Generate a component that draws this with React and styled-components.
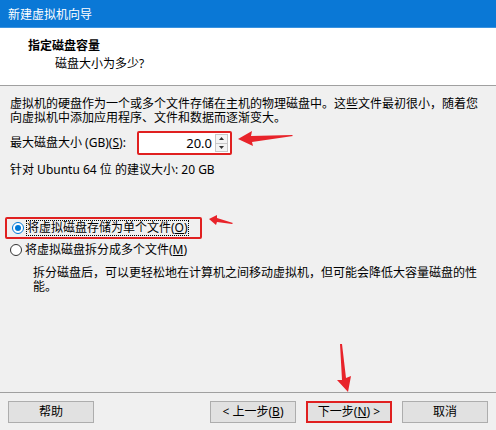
import React, { useState } from 'react';
import styled, { createGlobalStyle } from 'styled-components';

const GlobalStyle = createGlobalStyle`
  html, body {
    margin: 0;
    padding: 0;
    overflow: hidden;
  }
  body {
    font-family: "Noto Sans", "Noto Sans CJK SC", sans-serif;
    font-size: 12px;
    color: #000;
  }
`;

const Window = styled.div`
  position: relative;
  width: 496px;
  height: 430px;
  display: flex;
  flex-direction: column;
  background: #f0f0f0;
`;

const TitleBar = styled.div`
  height: 27px;
  background: #0a78d6;
  color: #fff;
  display: flex;
  align-items: center;
  padding-left: 8px;
  font-size: 12px;
  border-bottom: 1px solid #3a93e0;
`;

const Header = styled.div`
  height: 58px;
  background: #fff;
  border-bottom: 1px solid #a0a0a0;
  padding: 9px 0 0 28px;
  box-sizing: border-box;
  line-height: 18px;
`;

const HeaderTitle = styled.div`
  font-weight: bold;
`;

const HeaderSub = styled.div`
  padding-left: 27px;
`;

const Body = styled.div`
  flex: 1;
  padding: 11px 10px 0 10px;
  display: flex;
  flex-direction: column;
  line-height: 14px;
`;

const Paragraph = styled.p`
  margin: 0;
  padding-left: ${({ indent }) => indent || 0}px;
  margin-top: ${({ top }) => top || 0}px;
`;

const SizeRow = styled.div`
  display: flex;
  align-items: center;
  margin-top: 6px;
  height: 24px;
`;

const Label = styled.span`
  width: 127px;
  u { text-decoration: underline; }
`;

const Highlight = styled.div`
  border: 2px solid #e02020;
  border-radius: 2px;
  display: flex;
  align-items: center;
  box-sizing: border-box;
`;

const NumberBox = styled.div`
  width: 91px;
  height: 20px;
  background: #fff;
  display: flex;
  align-items: center;
  justify-content: flex-end;
  font-size: 13px;
`;

const Spinner = styled.div`
  width: 13px;
  height: 18px;
  margin: 0 2px 0 3px;
  border: 1px solid #c8c8c8;
  display: flex;
  flex-direction: column;
  box-sizing: border-box;
`;

const SpinHalf = styled.div`
  flex: 1;
  display: flex;
  align-items: center;
  justify-content: center;
  background: #f4f4f4;
  & + & { border-top: 1px solid #c8c8c8; }
`;

const Hint = styled.div`
  margin-top: 8px;
`;

const RadioGroup = styled.div`
  margin-top: 40px;
  margin-left: -5px;
  display: flex;
  flex-direction: column;
`;

const RadioRow = styled.label`
  display: flex;
  align-items: center;
  height: 22px;
  padding-left: 5px;
  gap: 3px;
  width: fit-content;
  box-sizing: border-box;
  border: 2px solid ${({ marked }) => (marked ? '#e02020' : 'transparent')};
  border-radius: 2px;
  padding-right: ${({ marked }) => (marked ? '12px' : '0')};
  margin-left: ${({ marked }) => (marked ? '0' : '-2px')};
`;

const RadioCircle = styled.span`
  width: 12px;
  height: 12px;
  border-radius: 50%;
  border: 1px solid ${({ checked }) => (checked ? '#0078d7' : '#333')};
  background: #fff;
  display: flex;
  align-items: center;
  justify-content: center;
  box-sizing: border-box;
  &::after {
    content: '';
    width: 6px;
    height: 6px;
    border-radius: 50%;
    background: ${({ checked }) => (checked ? '#0078d7' : 'transparent')};
  }
`;

const RadioText = styled.span`
  outline: ${({ focused }) => (focused ? '1px dotted #000' : 'none')};
  line-height: 14px;
`;

const Footer = styled.div`
  height: 38px;
  border-top: 1px solid #a0a0a0;
  display: flex;
  align-items: flex-start;
  padding: 8px 8px 0 8px;
  box-sizing: border-box;
  gap: 10px;
`;

const Spacer = styled.div`
  flex: 1;
`;

const Button = styled.button`
  width: 86px;
  height: 22px;
  background: #e1e1e1;
  border: ${({ primary }) => (primary ? '2px solid #e02020' : '1px solid #adadad')};
  font-family: inherit;
  font-size: 12px;
  color: #000;
  padding: 0;
  line-height: 18px;
`;

const Arrow = styled.svg`
  position: absolute;
  left: ${({ x }) => x}px;
  top: ${({ y }) => y}px;
  overflow: visible;
`;

export default function App() {
  const [mode, setMode] = useState('single');
  return (
    <>
      <GlobalStyle />
      <Window>
        <TitleBar>新建虚拟机向导</TitleBar>
        <Header>
          <HeaderTitle>指定磁盘容量</HeaderTitle>
          <HeaderSub>磁盘大小为多少?</HeaderSub>
        </Header>
        <Body>
          <Paragraph>
            虚拟机的硬盘作为一个或多个文件存储在主机的物理磁盘中。这些文件最初很小，随着您向虚拟机中添加应用程序、文件和数据而逐渐变大。
          </Paragraph>
          <SizeRow>
            <Label>最大磁盘大小 (GB)(<u>S</u>):</Label>
            <Highlight>
              <NumberBox>
                20.0
                <Spinner>
                  <SpinHalf>
                    <svg width="5" height="3" viewBox="0 0 5 3"><path d="M0 3 L2.5 0 L5 3 Z" fill="#333" /></svg>
                  </SpinHalf>
                  <SpinHalf>
                    <svg width="5" height="3" viewBox="0 0 5 3"><path d="M0 0 L2.5 3 L5 0 Z" fill="#333" /></svg>
                  </SpinHalf>
                </Spinner>
              </NumberBox>
            </Highlight>
          </SizeRow>
          <Hint>针对 Ubuntu 64 位 的建议大小: 20 GB</Hint>
          <RadioGroup>
            <RadioRow marked onClick={() => setMode('single')}>
              <RadioCircle checked={mode === 'single'} />
              <RadioText focused>将虚拟磁盘存储为单个文件(<u>O</u>)</RadioText>
            </RadioRow>
            <RadioRow onClick={() => setMode('multi')}>
              <RadioCircle checked={mode === 'multi'} />
              <RadioText>将虚拟磁盘拆分成多个文件(<u>M</u>)</RadioText>
            </RadioRow>
          </RadioGroup>
          <Paragraph indent={23} top={5}>
            拆分磁盘后，可以更轻松地在计算机之间移动虚拟机，但可能会降低大容量磁盘的性能。
          </Paragraph>
        </Body>
        <Footer>
          <Button>帮助</Button>
          <Spacer />
          <Button>&lt; 上一步(<u>B</u>)</Button>
          <Button primary>下一步(<u>N</u>) &gt;</Button>
          <Button>取消</Button>
        </Footer>

        <Arrow x={238} y={131} width="56" height="14" viewBox="0 0 56 14">
          <path d="M0 8 L14 0 L13 5 L54 4 L55 5 L14 11 L15 15 Z" fill="#e8232a" />
        </Arrow>
        <Arrow x={209} y={215} width="25" height="12" viewBox="0 0 25 12">
          <path d="M0 4 L8 0 L8 3 L24 8 L23 9 L8 7 L7 10 Z" fill="#e8232a" />
        </Arrow>
        <Arrow x={334} y={344} width="18" height="50" viewBox="0 0 18 50">
          <path d="M6 0 L8 0 L12 34 L17 32 L14 48 L3 36 L8 36 Z" fill="#e8232a" />
        </Arrow>
      </Window>
    </>
  );
}
